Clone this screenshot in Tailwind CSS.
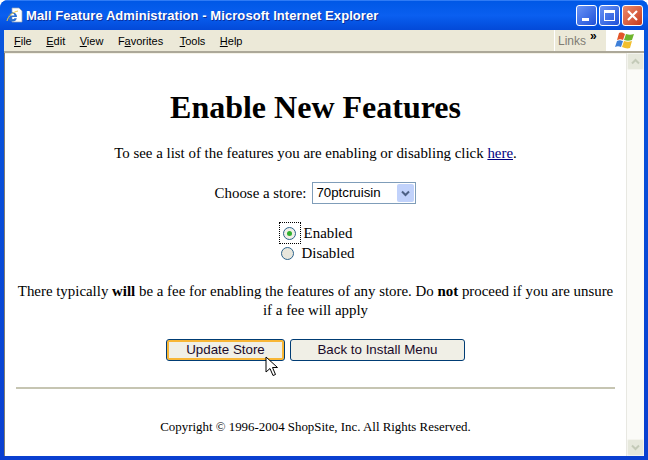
<!DOCTYPE html>
<html lang="en">
<head>
  <meta charset="UTF-8" />
  <script src="https://cdn.jsdelivr.net/npm/@tailwindcss/browser@4"></script>
  <title>Mall Feature Administration</title>
</head>
<body class="w-[648px] h-[460px] overflow-hidden relative">
  <div class="w-[648px] h-[460px] flex flex-col bg-[#0831d9] bg-gradient-to-b from-[#0a5ae8] from-0% via-[#0855dd] via-[8%] to-[#0a3fd0] rounded-t-lg overflow-hidden">
    <!-- title bar -->
    <div class="h-[30px] shrink-0 flex items-center pl-[6px] pr-[5px] bg-gradient-to-b from-[#0058e6] via-[#0a5ff0] to-[#0349d8] border-t border-[#2f7bf5]">
      <svg class="w-[17px] h-[17px] mr-[3px] shrink-0" viewBox="0 0 17 17">
        <path d="M6 1h7l3 3v11H6z" fill="#fff" stroke="#9aa5b5" stroke-width="0.7"/>
        <path d="M2 9.500a4.500 4.500 0 0 1 9 0.500H4.500a2.200 2.200 0 0 0 4 1.200h2.300A4.500 4.500 0 0 1 2 9.500z" fill="#2a6fd0"/>
        <path d="M4.500 8.500h4a2 2 0 0 0-4 0z" fill="#fff"/>
        <path d="M1 14c1-5 6-9 11-10" fill="none" stroke="#e9c84a" stroke-width="1"/>
      </svg>
      <span class="font-['Liberation_Sans',sans-serif] font-bold text-[13px] tracking-[0.07px] text-white [text-shadow:1px_1px_0_#0a2f9c] whitespace-nowrap">Mall Feature Administration - Microsoft Internet Explorer</span>
      <div class="ml-auto flex gap-[2px]">
        <div class="w-[21px] h-[21px] rounded-[3px] border border-white bg-gradient-to-br from-[#6a93f5] to-[#1f4fd8] flex items-end pl-[5px] pb-[4px]">
          <div class="w-[7px] h-[3px] bg-white"></div>
        </div>
        <div class="w-[21px] h-[21px] rounded-[3px] border border-white bg-gradient-to-br from-[#6a93f5] to-[#1f4fd8] flex items-center justify-center">
          <div class="w-[11px] h-[11px] border border-white border-t-[3px]"></div>
        </div>
        <div class="w-[21px] h-[21px] rounded-[3px] border border-white bg-gradient-to-br from-[#ec8a6a] to-[#c6371a] flex items-center justify-center">
          <svg class="w-[13px] h-[13px]" viewBox="0 0 13 13"><path d="M2 2l9 9M11 2l-9 9" stroke="#fff" stroke-width="2.2"/></svg>
        </div>
      </div>
    </div>
    <!-- menu bar -->
    <div class="h-[23px] mx-[4px] shrink-0 flex bg-[#ece9d8] border-b-2 border-[#aca899] font-['Liberation_Sans',sans-serif] text-[11px] text-black">
      <div class="flex-1 flex items-center pl-[10px] pt-[2px] gap-[14.5px]">
        <span><u>F</u>ile</span><span><u>E</u>dit</span><span><u>V</u>iew</span><span>F<u>a</u>vorites</span><span class="ml-[2px]"><u>T</u>ools</span><span><u>H</u>elp</span>
      </div>
      <div class="w-[52px] flex pl-[3px] pt-[2px] border-l border-white text-[#7f7c73] text-[12px] relative">Links
        <span class="absolute left-[35px] top-[0px] text-black font-bold text-[12px] leading-[12px]">»</span>
      </div>
      <div class="w-[38px] bg-white flex items-center justify-center">
        <svg class="w-[21px] h-[19px]" viewBox="0 0 21 19">
          <path d="M4 2c3-1 4 0 6 1L8 9C6 8 5 8 2 9z" fill="#e2562a"/>
          <path d="M11 3c3 1 5 1 8 0l-2 6c-3 1-5 1-8 0z" fill="#6fb52e"/>
          <path d="M2 10c2-1 3-1 6 0l-2 6c-2-1-4-1-6 0z" fill="#3d7fd8"/>
          <path d="M9 10c3 1 5 1 8 0l-2 7c-3 1-5 0-8-1z" fill="#f2bf2e"/>
        </svg>
      </div>
    </div>
    <!-- page area -->
    <div class="mx-[4px] mb-[4px] flex-1 flex min-h-0 border-l border-[#7f7c73] bg-white">
      <div class="flex-1 min-w-0 border-t border-[#f5f3e8] pl-[1px] pr-[1px] font-['Liberation_Serif',serif] text-[14.9px] leading-[18px] text-black text-center">
        <h1 class="mt-[33px] pt-[2px] text-[32px] leading-[37px] font-bold">Enable New Features</h1>
        <p class="mt-[18px]">To see a list of the features you are enabling or disabling click <a class="text-[#000080] underline">here</a>.</p>
        <div class="mt-[20px] flex justify-center items-center gap-[6px] h-[22px]">
          <span>Choose a store:</span>
          <div class="w-[104px] h-[22px] border border-[#7f9db9] flex items-center justify-between pl-[3px] pr-[1px] font-['Liberation_Sans',sans-serif] text-[13.3px]">
            <span>70ptcruisin</span>
            <div class="w-[17px] h-[18px] rounded-[2px] bg-[#c1d2fb] flex items-center justify-center">
              <svg class="w-[9px] h-[7px]" viewBox="0 0 9 7"><path d="M1 1.500l3.500 3.500L8 1.500" fill="none" stroke="#4d6185" stroke-width="2"/></svg>
            </div>
          </div>
        </div>
        <div class="mt-[19px] flex flex-col items-center">
          <div class="h-[20px] flex items-center">
            <span class="w-[22px] h-[22px] border border-dotted border-black flex items-center justify-center mr-[3px]">
              <span class="w-[13px] h-[13px] rounded-full border border-[#2c628b] bg-[#f0efe8] flex items-center justify-center"><span class="w-[5px] h-[5px] rounded-full bg-[#30b030]"></span></span>
            </span>
            <span>Enabled</span>
          </div>
          <div class="h-[20px] flex items-center pl-[4px]">
            <span class="w-[13px] h-[13px] rounded-full border border-[#2c628b] bg-[#e8e6dc] mr-[8px]"></span>
            <span>Disabled</span>
          </div>
        </div>
        <p class="mt-[19px] px-[10px] leading-[19px]">There typically <b>will</b> be a fee for enabling the features of any store. Do <b>not</b> proceed if you are unsure if a fee will apply</p>
        <div class="mt-[19px] flex justify-center gap-[5px] font-['Liberation_Sans',sans-serif] text-[13.33px] leading-[16px] text-[#1a0a2a]">
          <button class="w-[119px] h-[22px] rounded-[3px] border border-[#003c74] bg-[#f0efe6] shadow-[inset_0_0_0_2px_#f8b636]">Update Store</button>
          <button class="w-[175px] h-[22px] rounded-[3px] border border-[#003c74] bg-[#f0efe6]">Back to Install Menu</button>
        </div>
        <div class="mt-[26px] mx-[10px] h-[2px] bg-[#c6c5b2]"></div>
        <p class="mt-[31px] text-[12.9px] leading-[15px]">Copyright © 1996-2004 ShopSite, Inc. All Rights Reserved.</p>
      </div>
      <!-- scrollbar -->
      <div class="w-[18px] shrink-0 bg-[#fbfbf8] border-l border-[#e8e8e2] flex flex-col justify-between">
        <div class="h-[17px] bg-[#e6e8dc] rounded-[2px] border border-[#f4f4ee] flex items-center justify-center">
          <svg class="w-[9px] h-[7px]" viewBox="0 0 9 7"><path d="M1 5.500l3.500-3.500L8 5.500" fill="none" stroke="#c4cab8" stroke-width="2"/></svg>
        </div>
        <div class="h-[17px] bg-[#e6e8dc] rounded-[2px] border border-[#f4f4ee] flex items-center justify-center">
          <svg class="w-[9px] h-[7px]" viewBox="0 0 9 7"><path d="M1 1.500l3.500 3.500L8 1.500" fill="none" stroke="#c4cab8" stroke-width="2"/></svg>
        </div>
      </div>
    </div>
  </div>
  <!-- mouse pointer over the page -->
  <svg class="absolute left-[265px] top-[356px] w-[14px] h-[21px]" viewBox="0 0 14 21">
    <path d="M1 1v15l4-3.500 3 7 2.500-1-3-7h5z" fill="#fff" stroke="#000" stroke-width="1"/>
  </svg>
</body>
</html>
